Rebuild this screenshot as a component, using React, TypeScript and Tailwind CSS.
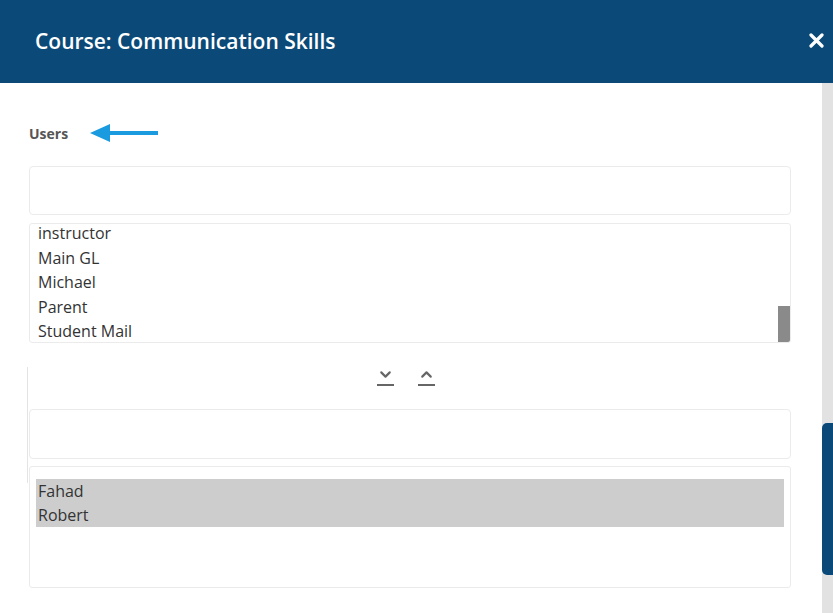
import { ChevronDown, ChevronUp } from 'lucide-react';

const available = ['instructor', 'Main GL', 'Michael', 'Parent', 'Student Mail'];
const selected = ['Fahad', 'Robert'];

export default function App() {
  return (
    <div className="flex h-[613px] w-[833px] flex-col overflow-hidden bg-white font-['Open_Sans',sans-serif]">
      {/* Header */}
      <div className="flex h-[83px] shrink-0 items-center justify-between bg-[#0b4a78] pl-[35px] pr-[9px]">
        <h1 className="text-[21px] font-semibold text-white">Course: Communication Skills</h1>
        <svg width="15" height="15" viewBox="0 0 15 15" className="-mt-[3px]">
          <path d="M2 2 L13 13 M13 2 L2 13" stroke="#fff" strokeWidth="3.2" strokeLinecap="round" />
        </svg>
      </div>

      <div className="flex min-h-0 flex-1">
        {/* Body */}
        <div className="flex min-w-0 flex-1 flex-col pl-[29px] pr-[31px]">
          <div className="mt-[40px] flex h-[20px] items-center">
            <span className="text-[14px] font-bold text-[#555]">Users</span>
            <svg width="70" height="22" viewBox="0 0 70 22" className="ml-[22px]">
              <path d="M0 11 L20 2 L20 9 L68 9 L68 13 L20 13 L20 20 Z" fill="#1a9be0" />
            </svg>
          </div>

          <div className="mt-[23px] h-[49px] rounded-[4px] border border-[#ebebeb]" />

          <div className="relative mt-[8px] h-[120px] overflow-hidden rounded-[3px] border border-[#ebebeb] pl-[8px]">
            <div className="-mt-[3px]">
              {available.map((u) => (
                <div key={u} className="h-[24.5px] text-[16px] leading-[24.5px] text-[#333]">
                  {u}
                </div>
              ))}
            </div>
            <div className="absolute bottom-0 right-0 h-[36px] w-[12px] bg-[#8a8a8a]" />
          </div>

          <div className="relative flex h-[66px] items-center justify-center gap-[24px] pr-[9px]">
            <div className="absolute left-[-2px] top-[24px] h-[116px] w-px bg-[#e4e4e4]" />
            <div className="flex flex-col items-center">
              <ChevronDown size={17} strokeWidth={3} className="text-[#666]" />
              <div className="mt-[1px] h-[2px] w-[17px] bg-[#666]" />
            </div>
            <div className="flex flex-col items-center">
              <ChevronUp size={17} strokeWidth={3} className="text-[#666]" />
              <div className="mt-[1px] h-[2px] w-[17px] bg-[#666]" />
            </div>
          </div>

          <div className="h-[50px] rounded-[4px] border border-[#ebebeb]" />

          <div className="mt-[7px] h-[122px] rounded-[3px] border border-[#ebebeb] px-[6px] pt-[12px]">
            <div className="bg-[#cdcdcd] pl-[2px]">
              {selected.map((u) => (
                <div key={u} className="h-[24px] text-[16px] leading-[24px] text-[#333]">
                  {u}
                </div>
              ))}
            </div>
          </div>
        </div>

        {/* Page scrollbar */}
        <div className="relative w-[11px] shrink-0 bg-[#e2e2e2]">
          <div className="absolute left-0 right-0 top-[340px] h-[152px] rounded-l-[5px] bg-[#0b4a78]" />
        </div>
      </div>
    </div>
  );
}
